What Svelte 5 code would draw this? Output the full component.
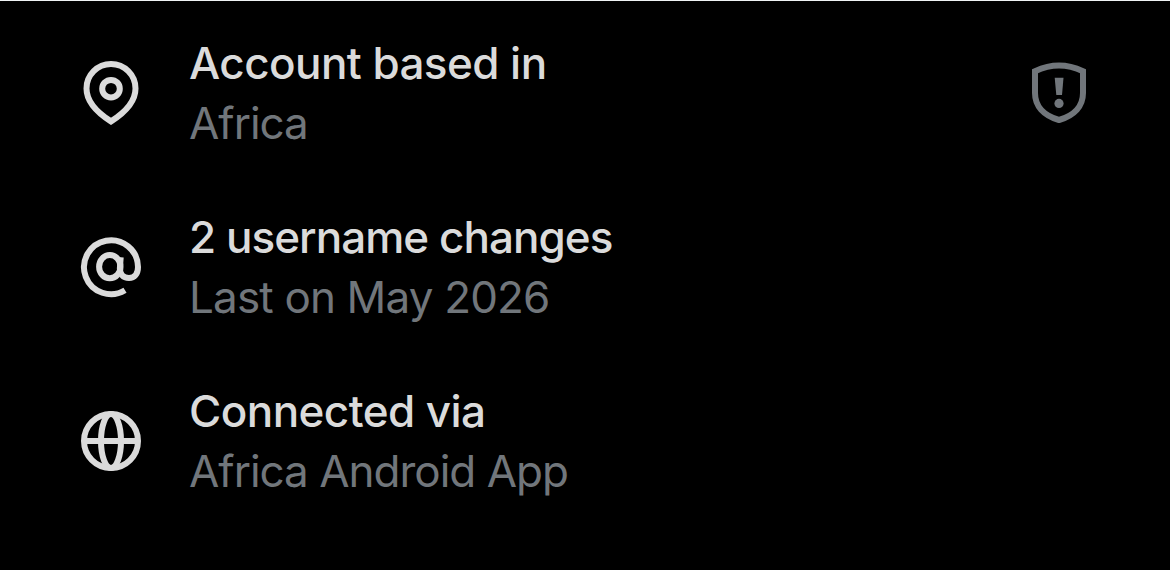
<script>
  /** Account details, one entry per row */
  const rows = [
    { icon: 'pin', title: 'Account based in', detail: 'Africa', shield: true },
    { icon: 'at', title: '2 username changes', detail: 'Last on May 2026' },
    { icon: 'globe', title: 'Connected via', detail: 'Africa Android App' }
  ];
</script>

<main class="about">
  {#each rows as row}
    <div class="row {row.icon}">
      <svg class="icon" viewBox="0 0 72 72" aria-hidden="true">
        {#if row.icon === 'pin'}
          <path d="M36 7C22.5 7 11.5 18 11.5 31.5C11.5 45 22 55.5 36 64.4C50 55.5 60.5 45 60.5 31.5C60.5 18 49.5 7 36 7Z" />
          <circle cx="36" cy="31.7" r="8.8" />
        {:else if row.icon === 'at'}
          <path d="M50 59.3A27 27 0 1 1 63 36C63 43 59.5 47 54 47C48 47 44.6 43 44.9 37L45.7 26.3" />
          <ellipse cx="34.8" cy="35.7" rx="10.7" ry="11.6" />
        {:else}
          <circle cx="36" cy="36" r="27" />
          <ellipse cx="36" cy="36" rx="10" ry="27" />
          <path d="M9 36H63" />
        {/if}
      </svg>

      <div class="text">
        <span class="title">{row.title}</span>
        <span class="detail">{row.detail}</span>
      </div>

      {#if row.shield}
        <svg class="icon shield" viewBox="0 0 72 72" aria-hidden="true">
          <path d="M36 8.6C28 8.6 20 10.6 12 14.2V36C12 49 20.5 58.5 36 63C51.5 58.5 60 49 60 36V14.2C52 10.6 44 8.6 36 8.6Z" />
          <path class="solid" d="M31.7 20.7H40.5L39 38H33.3Z" />
          <circle class="solid" cx="36" cy="46.4" r="4.6" />
        </svg>
      {/if}
    </div>
  {/each}
</main>

<style>
  :global(body) {
    background: #000;
  }

  .about {
    box-sizing: border-box;
    height: 570px;
    padding: 32px 75px 0;
    border-top: 1px solid #eff3f4;
    background: #000;
    font-family: Inter, 'Liberation Sans', sans-serif;
    font-size: 44px;
    line-height: 60px;
  }

  .row {
    display: flex;
    align-items: center;
    height: 120px;
    margin-bottom: 54px;
  }

  .icon {
    flex: none;
    width: 72px;
    height: 72px;
    fill: none;
    stroke: #dbdbdb;
    stroke-width: 6;
  }

  .text {
    display: flex;
    flex: 1;
    flex-direction: column;
    align-items: flex-start;
    margin-left: 42px;
    white-space: nowrap;
  }

  .title {
    color: #dbdbdb;
    font-weight: 500;
    letter-spacing: -0.56px;
  }

  .at .title {
    letter-spacing: -0.96px;
  }

  .detail {
    color: #71767b;
    font-weight: 400;
    letter-spacing: -1px;
  }

  .at .detail {
    letter-spacing: -0.84px;
  }

  .shield {
    stroke: #71767b;
  }

  .solid {
    fill: #71767b;
    stroke: none;
  }
</style>
